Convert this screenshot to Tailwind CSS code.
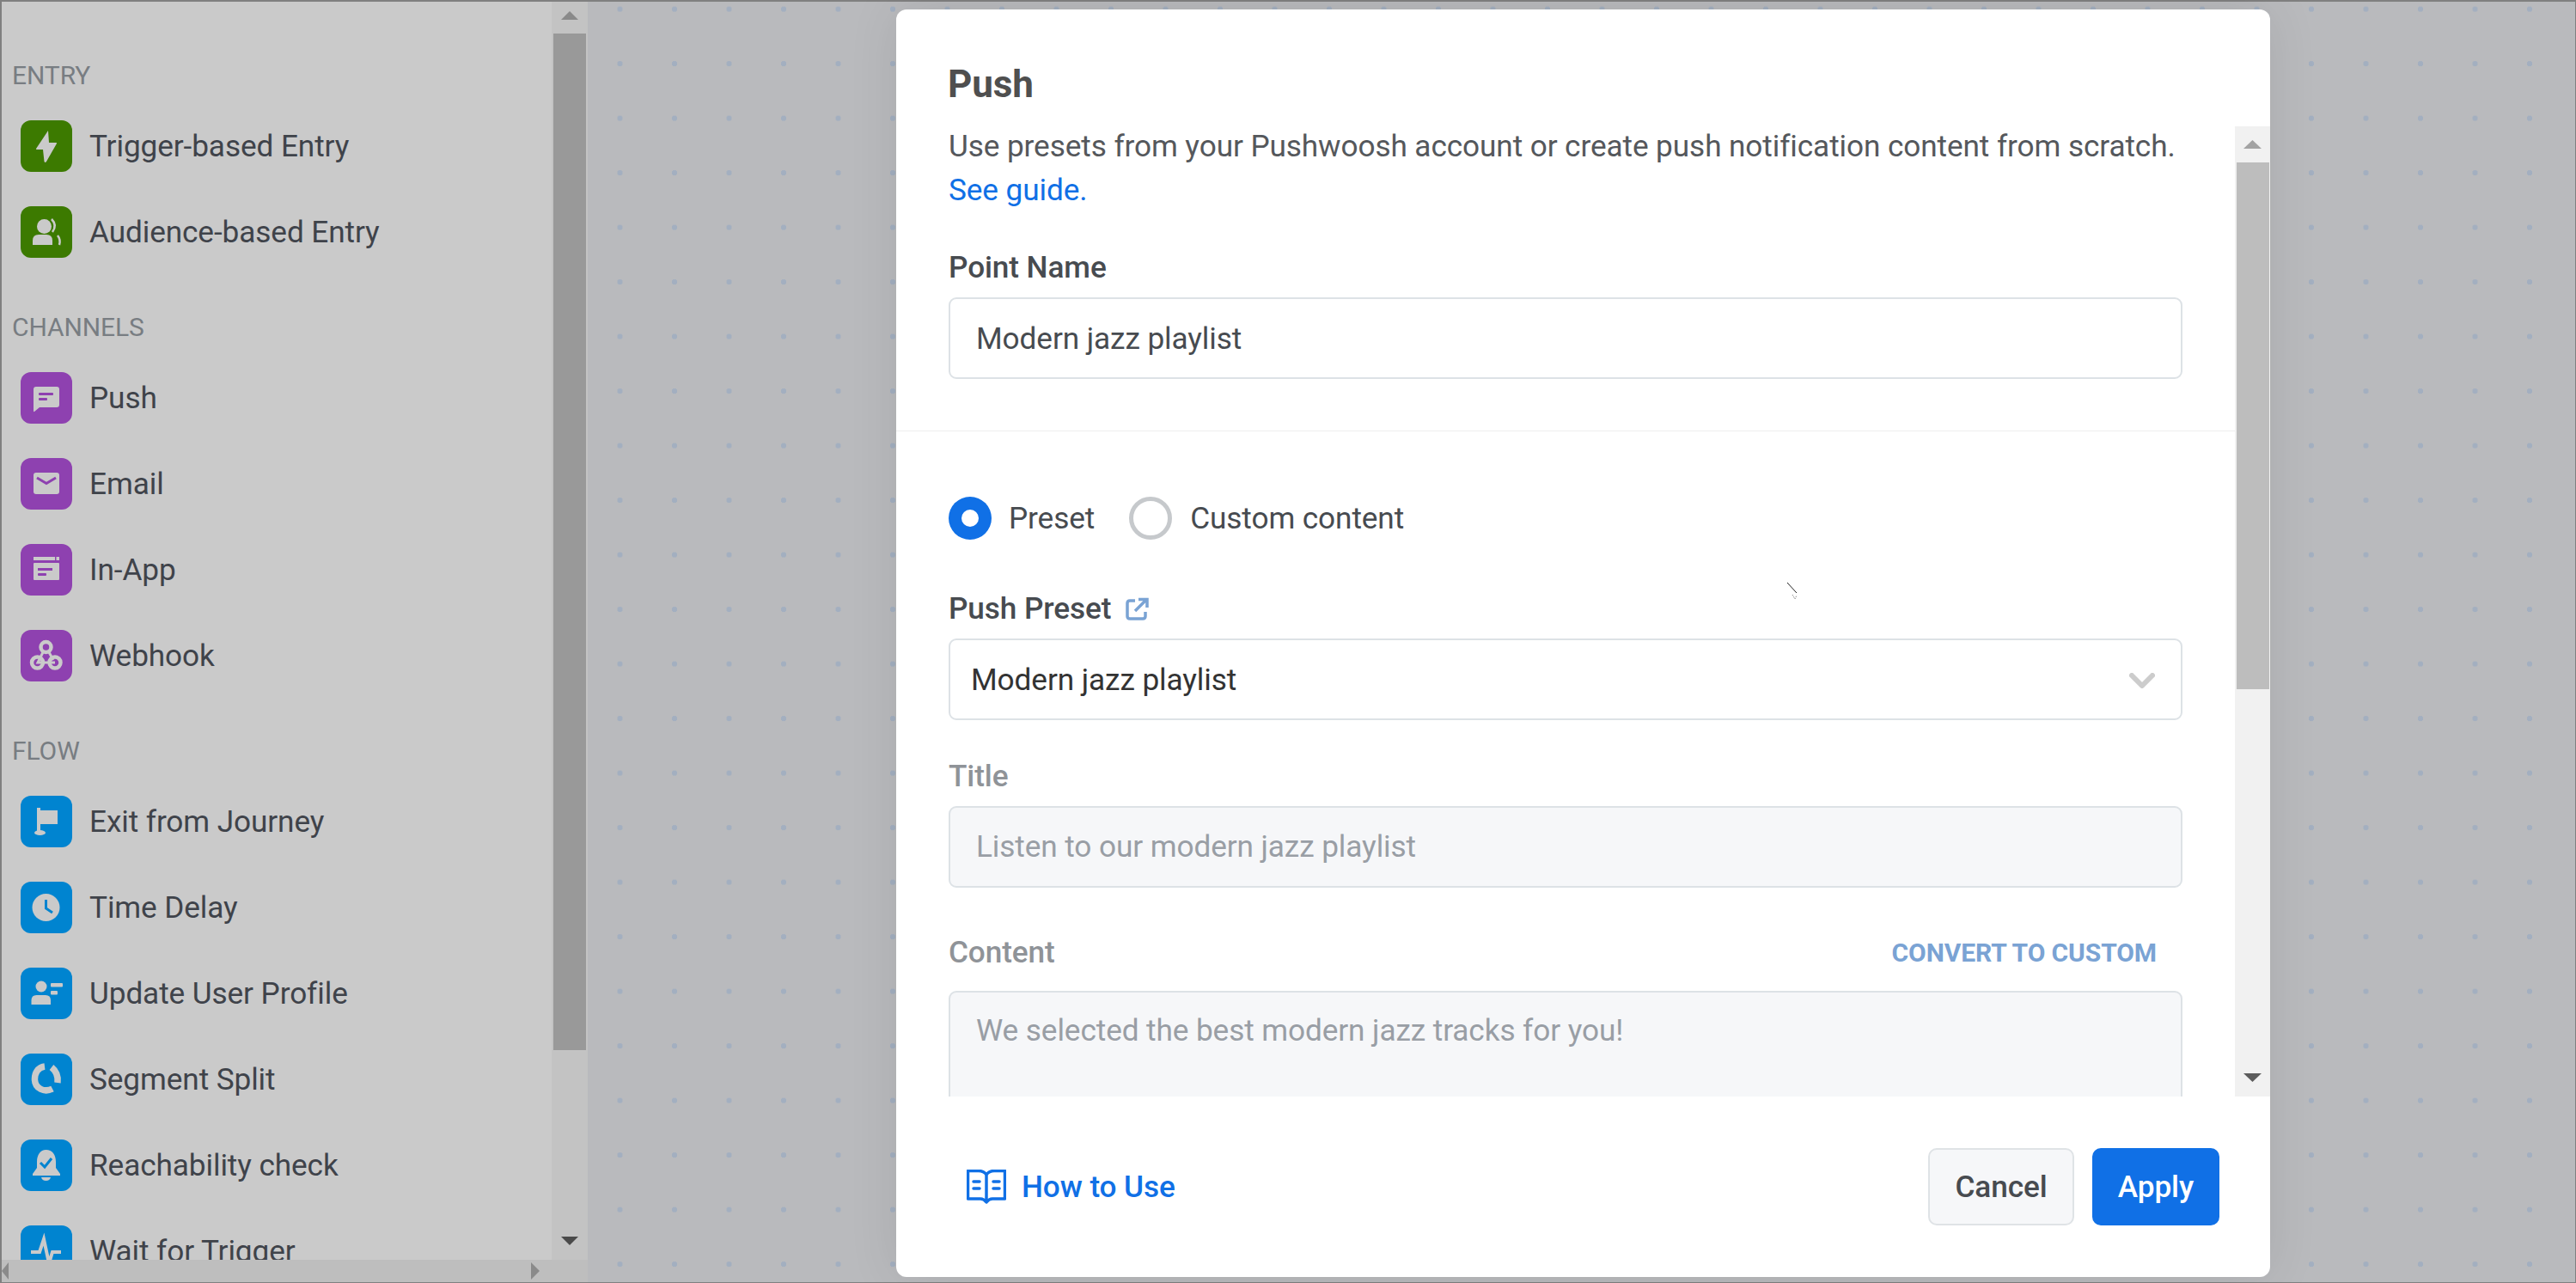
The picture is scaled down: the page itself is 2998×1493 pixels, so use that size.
<!DOCTYPE html>
<html lang="en">
<head>
    <meta charset="UTF-8">
    <title>Push</title>
    <script src="https://cdn.jsdelivr.net/npm/@tailwindcss/browser@4"></script>
</head>
<body class="font-['Roboto',sans-serif] overflow-hidden">
<div class="flex w-[2998px] h-[1493px] tracking-[-0.1px] border-t-2 border-l-2 border-r border-b border-[#808080] bg-[#b9babd]">

    <!-- Sidebar -->
    <aside class="flex flex-col w-[682px] h-full shrink-0 bg-[#cacaca]">
        <div class="flex flex-1 min-h-0">
            <div class="flex-1 overflow-hidden pt-[70px]">
                <h3 class="h-[32px] leading-[32px] pl-[12px] mb-[16px] text-[30px] text-[#787d82]">ENTRY</h3>
                <div class="h-[100px] flex items-center gap-[20px] pl-[22px] text-[35.2px] text-[#3f434a]">
                    <span class="w-[60px] h-[60px] rounded-[12px] bg-[#3c7a00] shrink-0"><svg viewBox="0 0 60 60" class="w-full h-full" fill="#cacaca"><path d="M32 12 L18 33 Q17.500 34 19 34 H26 L27.500 48 Q28.500 50 30 48 L42 27 Q42.500 26 41 26 H33 Z"/></svg></span>
                    <span>Trigger-based Entry</span>
                </div>
                <div class="h-[100px] flex items-center gap-[20px] pl-[22px] text-[35.2px] text-[#3f434a]">
                    <span class="w-[60px] h-[60px] rounded-[12px] bg-[#3c7a00] shrink-0"><svg viewBox="0 0 60 60" class="w-full h-full" fill="#cacaca"><ellipse cx="27.500" cy="23.500" rx="8.500" ry="8.500"/><path d="M14 45 V40 Q14 33 21 33 H30 Q37 33 37 40 V45 Z"/><path d="M36 15 Q43 22 37 30" fill="none" stroke="#cacaca" stroke-width="2.500"/><path d="M43 34 Q47 39 45 45" fill="none" stroke="#cacaca" stroke-width="2.500"/></svg></span>
                    <span>Audience-based Entry</span>
                </div>

                <h3 class="h-[32px] leading-[32px] pl-[12px] mt-[45px] mb-[16px] text-[30px] text-[#787d82]">CHANNELS</h3>
                <div class="h-[100px] flex items-center gap-[20px] pl-[22px] text-[35.2px] text-[#3f434a]">
                    <span class="w-[60px] h-[60px] rounded-[12px] bg-[#8e41b0] shrink-0"><svg viewBox="0 0 60 60" class="w-full h-full"><path fill="#cacaca" d="M18 17 H42 Q45 17 45 20 V38 Q45 41 42 41 H22 L16 46 Q15 46.500 15 45 V20 Q15 17 18 17 Z"/><rect x="21" y="24" width="17" height="3" rx="1" fill="#8e41b0"/><rect x="21" y="30" width="10" height="3" rx="1" fill="#8e41b0"/></svg></span>
                    <span>Push</span>
                </div>
                <div class="h-[100px] flex items-center gap-[20px] pl-[22px] text-[35.2px] text-[#3f434a]">
                    <span class="w-[60px] h-[60px] rounded-[12px] bg-[#8e41b0] shrink-0"><svg viewBox="0 0 60 60" class="w-full h-full"><rect x="15" y="17" width="30" height="25" rx="3" fill="#cacaca"/><path d="M19 23 L30 29.500 L41 23" fill="none" stroke="#8e41b0" stroke-width="3"/></svg></span>
                    <span>Email</span>
                </div>
                <div class="h-[100px] flex items-center gap-[20px] pl-[22px] text-[35.2px] text-[#3f434a]">
                    <span class="w-[60px] h-[60px] rounded-[12px] bg-[#8e41b0] shrink-0"><svg viewBox="0 0 60 60" class="w-full h-full"><rect x="15" y="15" width="25" height="4" fill="#cacaca"/><rect x="41.500" y="15" width="3.500" height="4" fill="#cacaca"/><rect x="15" y="22" width="30" height="20" rx="1" fill="#cacaca"/><rect x="20" y="28" width="17" height="3" fill="#8e41b0"/><rect x="20" y="34" width="10" height="3" rx="1" fill="#8e41b0"/></svg></span>
                    <span>In-App</span>
                </div>
                <div class="h-[100px] flex items-center gap-[20px] pl-[22px] text-[35.2px] text-[#3f434a]">
                    <span class="w-[60px] h-[60px] rounded-[12px] bg-[#8e41b0] shrink-0"><svg viewBox="0 0 60 60" class="w-full h-full" fill="none" stroke="#cacaca"><path d="M26 26 L20 38 H40 M33 26 L38 35" stroke-width="3"/><circle cx="29.500" cy="20" r="6" stroke-width="4.500"/><circle cx="19.500" cy="38" r="6.500" stroke-width="4.500"/><circle cx="40" cy="38" r="6.500" stroke-width="4.500"/></svg></span>
                    <span>Webhook</span>
                </div>

                <h3 class="h-[32px] leading-[32px] pl-[12px] mt-[45px] mb-[16px] text-[30px] text-[#787d82]">FLOW</h3>
                <div class="h-[100px] flex items-center gap-[20px] pl-[22px] text-[35.2px] text-[#3f434a]">
                    <span class="w-[60px] h-[60px] rounded-[12px] bg-[#0084d0] shrink-0"><svg viewBox="0 0 60 60" class="w-full h-full" fill="#cacaca"><rect x="19" y="14" width="4" height="29"/><rect x="22" y="17" width="21" height="16"/><ellipse cx="22.500" cy="43" rx="6.500" ry="3"/></svg></span>
                    <span>Exit from Journey</span>
                </div>
                <div class="h-[100px] flex items-center gap-[20px] pl-[22px] text-[35.2px] text-[#3f434a]">
                    <span class="w-[60px] h-[60px] rounded-[12px] bg-[#0084d0] shrink-0"><svg viewBox="0 0 60 60" class="w-full h-full"><circle cx="29.500" cy="30" r="16" fill="#cacaca"/><path d="M29.500 21 V31 L37 36" fill="none" stroke="#0084d0" stroke-width="3"/></svg></span>
                    <span>Time Delay</span>
                </div>
                <div class="h-[100px] flex items-center gap-[20px] pl-[22px] text-[35.2px] text-[#3f434a]">
                    <span class="w-[60px] h-[60px] rounded-[12px] bg-[#0084d0] shrink-0"><svg viewBox="0 0 60 60" class="w-full h-full" fill="#cacaca"><circle cx="24" cy="22" r="6.500"/><path d="M12.500 43 V38 Q12.500 32 18.500 32 H29 Q35 32 35 38 V43 Z"/><rect x="35" y="18" width="14" height="4.500" rx="1"/><rect x="35" y="27" width="8" height="4.500" rx="1"/></svg></span>
                    <span>Update User Profile</span>
                </div>
                <div class="h-[100px] flex items-center gap-[20px] pl-[22px] text-[35.2px] text-[#3f434a]">
                    <span class="w-[60px] h-[60px] rounded-[12px] bg-[#0084d0] shrink-0"><svg viewBox="0 0 60 60" class="w-full h-full" fill="none" stroke="#cacaca" stroke-width="7.500"><path d="M28 15 C 20 16 16 23 16.500 31 C 17 40 27 46 37 41"/><path d="M36 16 C 41 20 44 26 43 34"/></svg></span>
                    <span>Segment Split</span>
                </div>
                <div class="h-[100px] flex items-center gap-[20px] pl-[22px] text-[35.2px] text-[#3f434a]">
                    <span class="w-[60px] h-[60px] rounded-[12px] bg-[#0084d0] shrink-0"><svg viewBox="0 0 60 60" class="w-full h-full"><path fill="#cacaca" d="M29.500 12 C37 12 41 18 41 26 V33 L46 40 V42 H14 V40 L19 33 V26 C19 18 23 12 29.500 12 Z"/><path fill="#cacaca" d="M24 44 H35 Q34 48 29.500 48 Q25 48 24 44 Z"/><path d="M23 27 L28 32 L36 22" fill="none" stroke="#0084d0" stroke-width="3"/></svg></span>
                    <span>Reachability check</span>
                </div>
                <div class="h-[100px] flex items-center gap-[20px] pl-[22px] text-[35.2px] text-[#3f434a]">
                    <span class="w-[60px] h-[60px] rounded-[12px] bg-[#0084d0] shrink-0"><svg viewBox="0 0 60 60" class="w-full h-full"><path d="M12 31 H22 L27 16 L33 44 L37 31 H47" fill="none" stroke="#cacaca" stroke-width="4"/></svg></span>
                    <span>Wait for Trigger</span>
                </div>
            </div>
            <!-- vertical scrollbar -->
            <div class="flex flex-col items-center w-[42px] shrink-0 bg-[#c3c3c3]">
                <div class="h-[37px] w-full flex items-center justify-center pb-[6px] shrink-0"><svg width="20" height="10" viewBox="0 0 20 10"><polygon points="10,0 20,10 0,10" fill="#8a8a8a"/></svg></div>
                <div class="w-[38px] h-[1183px] bg-[#999999] shrink-0"></div>
                <div class="flex-1 w-full flex items-end justify-center pb-[17px]"><svg width="20" height="10" viewBox="0 0 20 10"><polygon points="0,0 20,0 10,10" fill="#4a4a4a"/></svg></div>
            </div>
        </div>
        <!-- horizontal scrollbar -->
        <div class="flex items-center justify-between h-[26px] shrink-0 bg-[#bebebe] pr-[56px]">
            <svg width="8" height="20" viewBox="0 0 8 20"><polygon points="8,0 8,20 0,10" fill="#8a8a8a"/></svg>
            <svg width="10" height="20" viewBox="0 0 10 20"><polygon points="0,0 10,10 0,20" fill="#8a8a8a"/></svg>
        </div>
    </aside>

    <!-- Canvas -->
    <main class="relative flex-1 bg-[radial-gradient(circle,#a3afc0_3px,transparent_3.5px)] bg-size-[63.5px_63.5px] bg-position-[5.75px_-23.15px]">

        <!-- Modal -->
        <section class="absolute left-[359px] top-[9px] flex flex-col w-[1599px] h-[1475px] rounded-[12px] bg-white overflow-hidden shadow-[0_0_60px_rgba(0,0,0,0.09)]">
            <header class="h-[135px] shrink-0 pl-[60px] pt-[63px]">
                <h1 class="text-[44px] leading-[48px] font-bold text-[#4f4f4f]">Push</h1>
            </header>

            <div class="flex flex-1 min-h-0">
                <div class="flex-1 overflow-hidden">
                    <div class="px-[61px] -mt-px">
                        <p class="text-[35.2px] leading-[51px] text-[#55585c]">Use presets from your Pushwoosh account or create push notification content from scratch.<br><span class="text-[#1070e6]">See guide.</span></p>
                        <label class="block mt-[44px] h-[40px] leading-[40px] text-[35.2px] font-medium text-[#474b50]">Point Name</label>
                        <div class="flex items-center mt-[15px] h-[95px] pl-[30px] pt-[2px] rounded-[9px] border-2 border-[#dde2e6] text-[35.2px] text-[#474b50]">Modern jazz playlist</div>
                    </div>

                    <hr class="mt-[60px] border-[#eeeeee]">

                    <div class="px-[61px]">
                        <div class="flex items-center mt-[76px] h-[50px] text-[35.2px] text-[#474b50]">
                            <span class="flex items-center justify-center w-[50px] h-[50px] rounded-full bg-[#1070e6] shrink-0"><span class="w-[20px] h-[20px] rounded-full bg-white"></span></span>
                            <span class="ml-[20px]">Preset</span>
                            <span class="ml-[40px] w-[50px] h-[50px] rounded-full border-[5px] border-[#c6c9cc] shrink-0"></span>
                            <span class="ml-[21px]">Custom content</span>
                        </div>

                        <div class="flex items-center gap-[17px] mt-[60px] h-[40px] text-[35.2px] font-medium text-[#474b50]">
                            <span>Push Preset</span>
                            <svg width="27" height="27" viewBox="0 0 27 27" fill="none" stroke="#7aa3d4" stroke-width="3.500"><path d="M11 4 H5 Q2 4 2 7 V22 Q2 25 5 25 H20 Q23 25 23 22 V17"/><path d="M11 16 L23 4 M15 2.500 H25 V12"/></svg>
                        </div>
                        <div class="flex items-center justify-between mt-[15px] h-[95px] pl-[24px] pr-[30px] pt-[2px] rounded-[9px] border-2 border-[#dde2e6] text-[35.2px] text-[#333333]">
                            <span>Modern jazz playlist</span>
                            <svg width="30" height="18" viewBox="0 0 30 18" fill="none" stroke="#cccccc" stroke-width="6" stroke-linecap="round" stroke-linejoin="round"><path d="M3 3 L15 15 L27 3"/></svg>
                        </div>

                        <label class="block mt-[45px] h-[40px] leading-[40px] text-[35.2px] font-medium text-[#8f9398]">Title</label>
                        <div class="flex items-center mt-[15px] h-[95px] pl-[30px] rounded-[9px] border-2 border-[#dde2e6] bg-[#f6f7f9] text-[35.2px] text-[#999ea5]">Listen to our modern jazz playlist</div>

                        <div class="flex items-center justify-between mt-[55px] h-[40px] pr-[30px]">
                            <label class="text-[35.2px] font-medium text-[#8f9398]">Content</label>
                            <span class="text-[30px] font-bold text-[#7aa3d4]">CONVERT TO CUSTOM</span>
                        </div>
                        <div class="mt-[25px] h-[200px] pl-[30px] pt-[24px] leading-[40px] rounded-[9px] border-2 border-[#dde2e6] bg-[#f6f7f9] text-[35.2px] text-[#999ea5]">We selected the best modern jazz tracks for you!</div>
                    </div>
                </div>

                <!-- modal scrollbar -->
                <div class="flex flex-col items-center w-[41px] shrink-0 bg-[#f1f1f1] mt-px">
                    <div class="h-[42px] w-full flex items-center justify-center shrink-0"><svg width="21" height="10" viewBox="0 0 21 10"><polygon points="10.500,0 21,10 0,10" fill="#a3a3a3"/></svg></div>
                    <div class="w-[38px] h-[613px] bg-[#bdbdbd] shrink-0"></div>
                    <div class="flex-1 w-full flex items-end justify-center pb-[17px]"><svg width="21" height="10" viewBox="0 0 21 10"><polygon points="0,0 21,0 10.500,10" fill="#5c5c5c"/></svg></div>
                </div>
            </div>

            <footer class="flex items-start justify-between h-[210px] shrink-0 pt-[60px] pl-[82px] pr-[59px]">
                <div class="flex items-center gap-[18px] h-[90px] text-[35.2px] font-medium text-[#1070e6]">
                    <svg width="46" height="40" viewBox="0 0 46 40" fill="none" stroke="#1070e6" stroke-width="3.500" stroke-linecap="round" stroke-linejoin="round"><path d="M23 6 Q20 1.500 14 1.500 H1.500 V34 H16 Q20 34 23 38 Q26 34 30 34 H44.500 V1.500 H32 Q26 1.500 23 6 V37"/><path d="M8 14 H15 M8 22 H15 M31 14 H38 M31 22 H38"/></svg>
                    <span>How to Use</span>
                </div>
                <div class="flex gap-[21px]">
                    <button class="w-[170px] h-[90px] rounded-[10px] border-2 border-[#dfe3e6] bg-[#f6f7f9] text-[35.2px] font-medium text-[#474b50]">Cancel</button>
                    <button class="w-[148px] h-[90px] rounded-[10px] bg-[#1070e6] text-[35.2px] font-medium text-white">Apply</button>
                </div>
            </footer>
        </section>

        <!-- stray cursor left in the capture -->
        <svg class="absolute left-[1395px] top-[675px]" width="14" height="22" viewBox="0 0 14 22" fill="none"><path d="M1 1 L12 13" stroke="#222222" stroke-width="1"/><path d="M7 15 L10 20 L12 16" stroke="#777777" stroke-width="1" stroke-dasharray="1 1"/></svg>
    </main>
</div>
</body>
</html>
